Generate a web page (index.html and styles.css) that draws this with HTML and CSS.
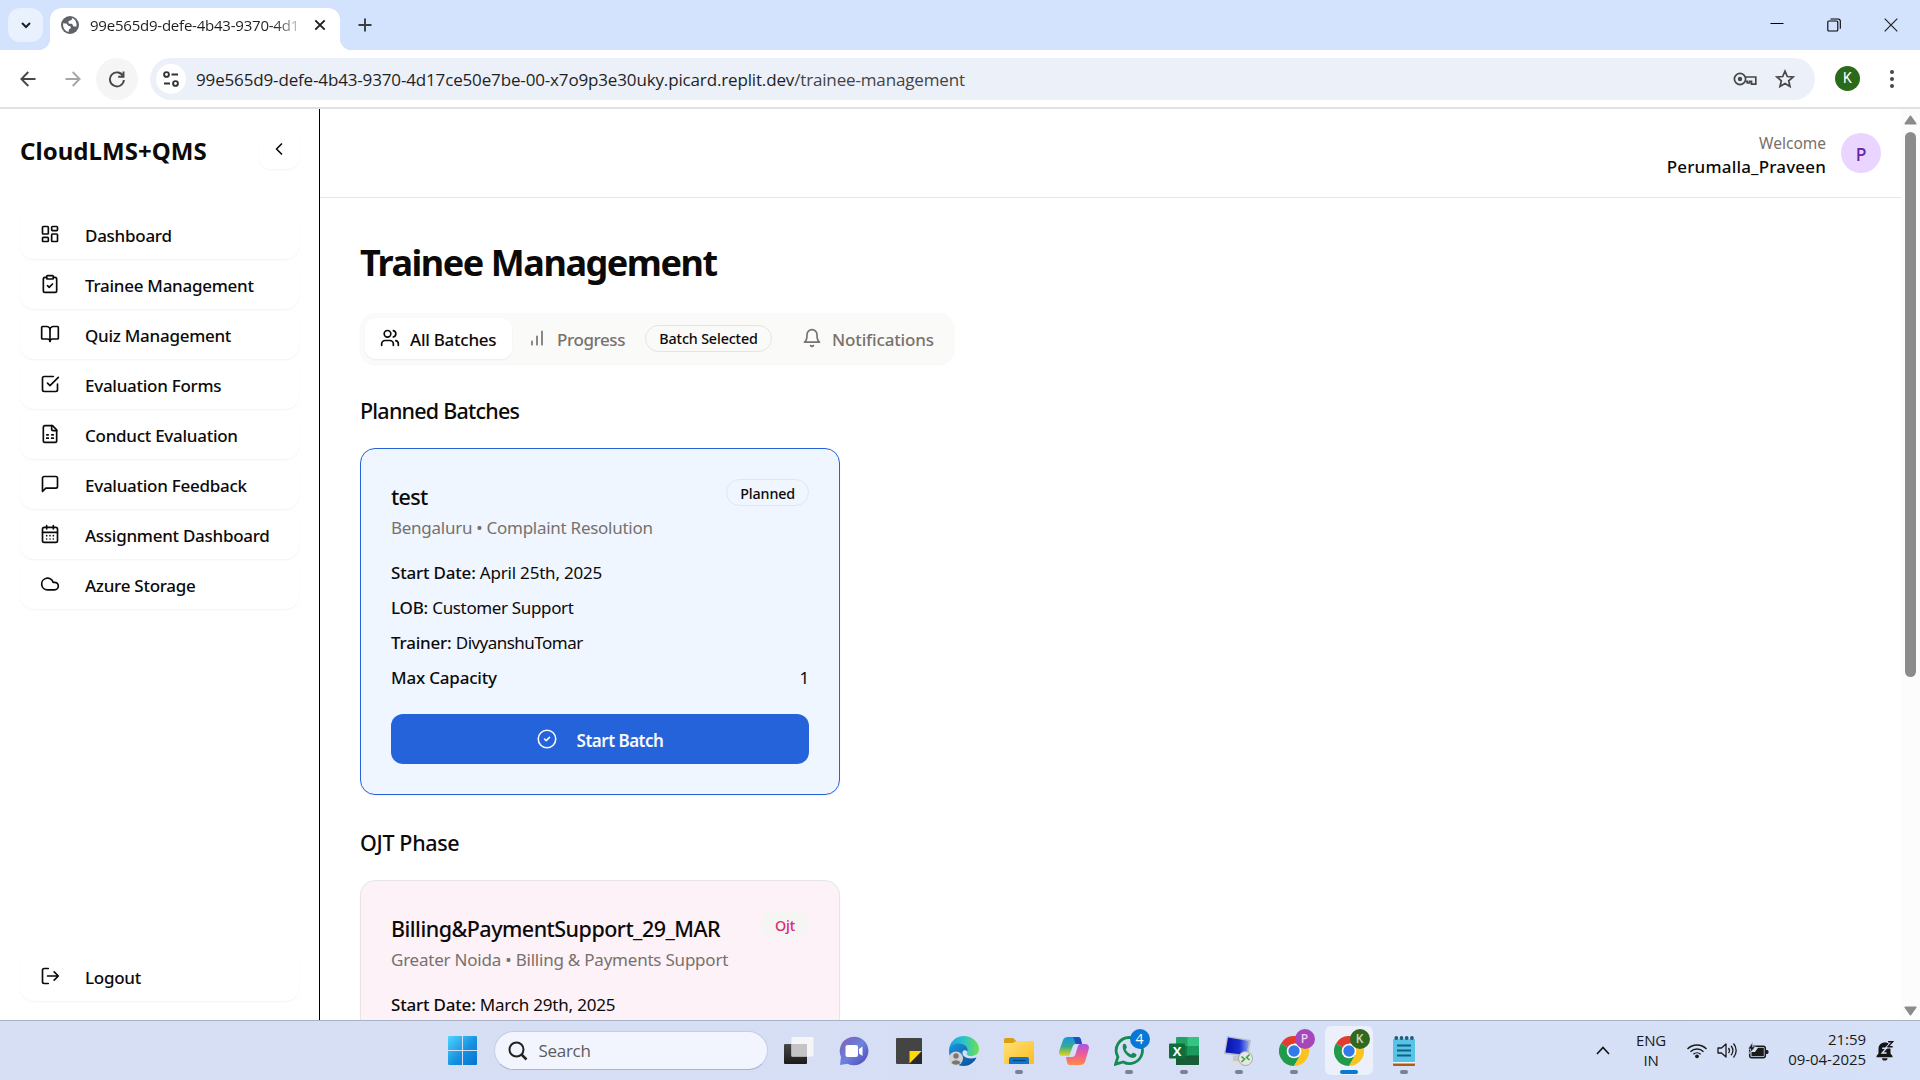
FILE: index.html
```html
<!DOCTYPE html>
<html lang="en">
<head>
<meta charset="utf-8">
<title>Trainee Management</title>
<link rel="stylesheet" href="styles.css">
</head>
<body>
<div class="tabstrip">
  <div class="tab-search"><svg width="12" height="12" viewBox="0 0 12 12"><path d="M2 4l4 4 4-4" fill="none" stroke="#1f1f1f" stroke-width="2"/></svg></div>
  <div class="tab">
    <svg class="favicon" width="18" height="18" viewBox="0 0 18 18"><circle cx="9" cy="9" r="9" fill="#5f6368"/><path d="M11.2 2.1c-.3 1.6-.6 2.3-1.8 2.5-1.700.2-1.900.4-1.900 1.600 0 1 .4 1.500 1.600 1.500 2.200 0 2.600.6 2.800 1.900.2.9.900 1 1.900 1l1.600-.1A7.200 7.200 0 0 0 11.200 2.100zM2.200 7.200C1.500 11 3.500 14.800 7.500 16l.300-1.700c.1-.900.500-1.200 1.300-1.600 1-.5 1-2-.1-2.500C7.900 9.700 7 9.900 6.500 8.900 6 7.800 5.500 7.600 4.500 7.500z" fill="#fff"/></svg>
    <span class="tab-title">99e565d9-defe-4b43-9370-4d1</span>
    <svg width="12" height="12" viewBox="0 0 12 12"><path d="M1.300 1.300l9.400 9.400M10.700 1.300l-9.400 9.400" stroke="#1f1f1f" stroke-width="1.900"/></svg>
  </div>
  <svg class="new-tab" width="14" height="14" viewBox="0 0 14 14"><path d="M7 .5v13M.5 7h13" stroke="#3c3c3c" stroke-width="1.900"/></svg>
  <div class="window-controls">
    <svg width="14" height="14" viewBox="0 0 14 14"><path d="M.5 5.500h13" stroke="#000"/></svg>
    <svg width="14" height="14" viewBox="0 0 14 14" fill="none" stroke="#000" stroke-width="1.100"><rect x=".8" y="3" width="10" height="10" rx="1"/><path d="M3.500 1h7.500a2.300 2.300 0 0 1 2.300 2.300v7.500"/></svg>
    <svg width="14" height="14" viewBox="0 0 14 14"><path d="M.7.7l12.600 12.600M13.300.7L.7 13.300" stroke="#222" stroke-width="1.200"/></svg>
  </div>
</div>

<div class="toolbar">
  <svg class="back" width="16" height="16" viewBox="0 0 16 16" fill="none" stroke="#474747" stroke-width="1.900"><path d="M15.500 8H1.500M8.300 1L1.400 8l6.900 7"/></svg>
  <svg class="forward" width="16" height="16" viewBox="0 0 16 16" fill="none" stroke="#a6a6a6" stroke-width="1.900"><path d="M.5 8h14M7.700 1l6.900 7-6.900 7"/></svg>
  <div class="reload"><svg width="18" height="18" viewBox="0 0 18 18" fill="none" stroke="#474747" stroke-width="1.900"><path d="M15.300 6.500A7 7 0 1 0 15.900 10"/><path d="M15.500 1.500v5.300h-5.300"/></svg></div>
  <div class="omnibox">
    <div class="site-info"><svg width="18" height="18" viewBox="0 0 18 18" fill="none" stroke="#333" stroke-width="1.900"><circle cx="4.500" cy="4.500" r="2.400"/><path d="M9.500 4.500H16M2 13.500h6"/><circle cx="13.500" cy="13.500" r="2.400"/></svg></div>
    <span class="url">99e565d9-defe-4b43-9370-4d17ce50e7be-00-x7o9p3e30uky.picard.replit.dev<span class="path">/trainee-management</span></span>
    <svg class="key" width="24" height="14" viewBox="0 0 24 14" fill="none" stroke="#474747" stroke-width="1.700"><circle cx="7" cy="7" r="5.600"/><circle cx="7" cy="7" r="2.200" fill="#474747" stroke="none"/><path d="M12.300 5h10.500v7.200h-4.300V9.300h-2V11h-2.200V9.300h-2"/></svg>
    <svg class="star" width="20" height="20" viewBox="0 0 20 20"><path d="M10 2.200l2.300 5.300 5.800.5-4.400 3.800 1.300 5.700-5-3-5 3 1.300-5.700L1.900 8l5.800-.5z" fill="none" stroke="#474747" stroke-width="1.700"/></svg>
  </div>
  <div class="profile">K</div>
  <svg class="menu" width="4" height="20" viewBox="0 0 4 20" fill="#474747"><circle cx="2" cy="3" r="2"/><circle cx="2" cy="10" r="2"/><circle cx="2" cy="17" r="2"/></svg>
</div>

<div class="page">
  <aside class="sidebar">
    <div class="brand-row">
      <div class="brand">CloudLMS+QMS</div>
      <div class="collapse"><svg class="ico" viewBox="0 0 24 24"><path d="m15 18-6-6 6-6"/></svg></div>
    </div>
    <nav class="nav">
      <a class="nav-item"><svg class="ico" viewBox="0 0 24 24"><rect width="7" height="9" x="3" y="3" rx="1"/><rect width="7" height="5" x="14" y="3" rx="1"/><rect width="7" height="9" x="14" y="12" rx="1"/><rect width="7" height="5" x="3" y="16" rx="1"/></svg><span>Dashboard</span></a>
      <a class="nav-item"><svg class="ico" viewBox="0 0 24 24"><rect width="8" height="4" x="8" y="2" rx="1"/><path d="M16 4h2a2 2 0 0 1 2 2v14a2 2 0 0 1-2 2H6a2 2 0 0 1-2-2V6a2 2 0 0 1 2-2h2"/><path d="m9 14 2 2 4-4"/></svg><span>Trainee Management</span></a>
      <a class="nav-item"><svg class="ico" viewBox="0 0 24 24"><path d="M12 7v14"/><path d="M3 18a1 1 0 0 1-1-1V4a1 1 0 0 1 1-1h5a4 4 0 0 1 4 4 4 4 0 0 1 4-4h5a1 1 0 0 1 1 1v13a1 1 0 0 1-1 1h-6a3 3 0 0 0-3 3 3 3 0 0 0-3-3z"/></svg><span>Quiz Management</span></a>
      <a class="nav-item"><svg class="ico" viewBox="0 0 24 24"><path d="m9 11 3 3L22 4"/><path d="M21 12v7a2 2 0 0 1-2 2H5a2 2 0 0 1-2-2V5a2 2 0 0 1 2-2h11"/></svg><span>Evaluation Forms</span></a>
      <a class="nav-item"><svg class="ico" viewBox="0 0 24 24"><path d="M15 2H6a2 2 0 0 0-2 2v16a2 2 0 0 0 2 2h12a2 2 0 0 0 2-2V7Z"/><path d="M14 2v4a2 2 0 0 0 2 2h4"/><path d="M8 13h2M14 13h2M8 17h2M14 17h2"/></svg><span>Conduct Evaluation</span></a>
      <a class="nav-item"><svg class="ico" viewBox="0 0 24 24"><path d="M21 15a2 2 0 0 1-2 2H7l-4 4V5a2 2 0 0 1 2-2h14a2 2 0 0 1 2 2z"/></svg><span>Evaluation Feedback</span></a>
      <a class="nav-item"><svg class="ico" viewBox="0 0 24 24"><path d="M8 2v4M16 2v4"/><rect width="18" height="18" x="3" y="4" rx="2"/><path d="M3 10h18M8 14h.01M12 14h.01M16 14h.01M8 18h.01M12 18h.01M16 18h.01"/></svg><span>Assignment Dashboard</span></a>
      <a class="nav-item"><svg class="ico" viewBox="0 0 24 24"><path d="M17.500 19H9a7 7 0 1 1 6.710-9h1.790a4.500 4.500 0 1 1 0 9Z"/></svg><span>Azure Storage</span></a>
    </nav>
    <a class="nav-item logout"><svg class="ico" viewBox="0 0 24 24"><path d="M10 3H5a2 2 0 0 0-2 2v14a2 2 0 0 0 2 2h5M9 12h13M17 7l5 5-5 5"/></svg><span>Logout</span></a>
  </aside>

  <div class="content">
    <header class="header">
      <div class="user"><div class="welcome">Welcome</div><div class="username">Perumalla_Praveen</div></div>
      <div class="avatar">P</div>
    </header>
    <main class="main">
      <h1>Trainee Management</h1>
      <div class="tabs">
        <div class="tab-item active"><svg class="ico" viewBox="0 0 24 24"><path d="M16 21v-2a4 4 0 0 0-4-4H6a4 4 0 0 0-4 4v2"/><circle cx="9" cy="7" r="4"/><path d="M22 21v-2a4 4 0 0 0-3-3.870M16 3.130a4 4 0 0 1 0 7.750"/></svg><span class="w-all">All Batches</span></div>
        <div class="tab-item progress"><svg class="ico" viewBox="0 0 24 24"><path d="M12 20V10M18 20V4M6 20v-4"/></svg><span class="w-progress">Progress</span><div class="badge outline">Batch Selected</div></div>
        <div class="tab-item"><svg class="ico" viewBox="0 0 24 24"><path d="M6 8a6 6 0 0 1 12 0c0 7 3 9 3 9H3s3-2 3-9"/><path d="M10.300 21a1.940 1.940 0 0 0 3.400 0"/></svg><span class="w-notif">Notifications</span></div>
      </div>

      <h2>Planned Batches</h2>
      <section class="card planned">
        <div class="card-head"><h3>test</h3><div class="badge outline">Planned</div></div>
        <p class="sub">Bengaluru • Complaint Resolution</p>
        <div class="rows">
          <div class="row"><b>Start Date:</b> April 25th, 2025</div>
          <div class="row"><b>LOB:</b> <span class="lob">Customer Support</span></div>
          <div class="row"><b>Trainer:</b> <span class="trainer">DivyanshuTomar</span></div>
          <div class="row split"><b>Max Capacity</b><span>1</span></div>
        </div>
        <button class="start"><svg class="ico" viewBox="0 0 24 24"><circle cx="12" cy="12" r="10.500"/><path d="m9 12 2 2 4-4"/></svg><span>Start Batch</span></button>
      </section>

      <h2 class="ojt-title">OJT Phase</h2>
      <section class="card ojt">
        <div class="card-head"><h3 class="long">Billing&amp;PaymentSupport_29_MAR</h3><div class="badge pink">Ojt</div></div>
        <p class="sub">Greater Noida • Billing &amp; Payments Support</p>
        <div class="rows"><div class="row"><b>Start Date:</b> March 29th, 2025</div></div>
      </section>
    </main>
  </div>

  <div class="scrollbar">
    <svg width="13" height="10" viewBox="0 0 13 10"><path d="M6.500 1.200L11.800 8.800H1.200z" fill="#8b8b8b" stroke="#8b8b8b" stroke-width="1.500" stroke-linejoin="round"/></svg>
    <div class="thumb"></div>
    <svg width="13" height="10" viewBox="0 0 13 10"><path d="M6.500 8.800L11.800 1.200H1.200z" fill="#8b8b8b" stroke="#8b8b8b" stroke-width="1.500" stroke-linejoin="round"/></svg>
  </div>
</div>

<div class="taskbar">
  <svg class="win" width="29" height="29" viewBox="0 0 29 29"><defs><linearGradient id="w" x1="0" y1="0" x2="1" y2="1"><stop offset="0" stop-color="#4fd4ff"/><stop offset=".55" stop-color="#1691e0"/><stop offset="1" stop-color="#0672d0"/></linearGradient></defs><path d="M1 0h13v14H0V1a1 1 0 0 1 1-1zM15 0h13a1 1 0 0 1 1 1v13H15zM0 15h14v14H1a1 1 0 0 1-1-1zM15 15h14v13a1 1 0 0 1-1 1H15z" fill="url(#w)"/></svg>
  <div class="search"><svg width="20" height="20" viewBox="0 0 20 20" fill="none" stroke="#222" stroke-width="2"><circle cx="8.500" cy="8.500" r="7"/><path d="M13.500 13.500l5 5" stroke-width="2.500"/></svg><span>Search</span></div>
  <div class="apps">
    <div class="app"><svg width="30" height="30" viewBox="0 0 30 30"><defs><linearGradient id="tk" x1="0" y1="0" x2="0" y2="1"><stop offset="0" stop-color="#484848"/><stop offset="1" stop-color="#1a1a1a"/></linearGradient></defs><rect x="0" y="8" width="23" height="20" rx="1" fill="url(#tk)"/><rect x="7.500" y="1" width="22" height="19.500" rx="1" fill="#f6f6f6"/><path d="M7.500 8H23v12.500H7.500z" fill="#c4c4c4"/></svg></div>
    <div class="app"><svg width="30" height="30" viewBox="0 0 30 30"><defs><linearGradient id="ch" x1="0" y1="0" x2="1" y2="1"><stop offset="0" stop-color="#9a5fae"/><stop offset=".3" stop-color="#6d73cc"/><stop offset=".5" stop-color="#6c83dd"/><stop offset="1" stop-color="#4b45b8"/></linearGradient></defs><path d="M15 .7a14.300 14.300 0 1 1-6.500 27L1 29l1-8A14.300 14.300 0 0 1 15 .7z" fill="url(#ch)"/><rect x="6.500" y="9" width="12.500" height="12" rx="2" fill="#fff"/><path d="M20 13l3.500-2.500V20L20 17.500z" fill="#fff"/></svg></div>
    <div class="app"><svg width="30" height="30" viewBox="0 0 30 30"><rect x="2" y="2" width="26" height="26" rx="1" fill="#444"/><path d="M15.500 15H28L15.500 27.500z" fill="#ffd900"/><path d="M28 15v13H15.500z" fill="#292929"/></svg></div>
    <div class="app"><svg width="30" height="30" viewBox="0 0 30 30"><defs><linearGradient id="e1" x1="0" y1="0" x2="1" y2="0"><stop offset="0" stop-color="#18a6e2"/><stop offset=".5" stop-color="#2bc3c9"/><stop offset="1" stop-color="#70e04f"/></linearGradient><linearGradient id="e2" x1="0" y1="0" x2="1" y2="1"><stop offset="0" stop-color="#1a96de"/><stop offset="1" stop-color="#0c4b98"/></linearGradient></defs><path d="M0 15C0 6 7 0 15 0s15 6 15 13c0 5-4 7-8 7s-5-2-3.500-4S18 11 14 11 2 11 0 15z" fill="url(#e1)"/><path d="M0 15C1 8 8 6.500 13 8s6.500 5.500 5.500 8c-1.500-2.500-4.500-2-5 0-1 5 6 8 14 5.500C25 27 20 30 15 30 6 30 0 23 0 15z" fill="url(#e2)"/><circle cx="7" cy="22.500" r="7" fill="#d2d2d2"/><circle cx="7" cy="20" r="2.700" fill="#777"/><path d="M2.500 27a4.700 4 0 0 1 9 0 7 7 0 0 1-9 0z" fill="#777"/></svg></div>
    <div class="app open"><svg width="30" height="30" viewBox="0 0 30 30"><defs><linearGradient id="f" x1="0" y1="0" x2="1" y2="1"><stop offset="0" stop-color="#ffe17a"/><stop offset="1" stop-color="#fcbc1d"/></linearGradient></defs><path d="M0 3.500A1.500 1.500 0 0 1 1.500 2H9l4 3.500V8H0z" fill="#dc9e0e"/><path d="M0 7h9l3-2h17a1 1 0 0 1 1 1v21a1 1 0 0 1-1 1H1a1 1 0 0 1-1-1z" fill="url(#f)"/><path d="M5 28v-5a2 2 0 0 1 2-2h16a2 2 0 0 1 2 2v5z" fill="#1274cc"/><path d="M8.500 24.500h13" stroke="#07437f" stroke-width="1.200"/></svg></div>
    <div class="app"><svg width="30" height="30" viewBox="0 0 30 30"><defs><linearGradient id="c1" x1="0" y1="0" x2="0" y2="1"><stop offset="0" stop-color="#1496e8"/><stop offset=".5" stop-color="#39a98c"/><stop offset="1" stop-color="#e8d51c"/></linearGradient><linearGradient id="c2" x1="0" y1="0" x2="0" y2="1"><stop offset="0" stop-color="#a854ec"/><stop offset=".5" stop-color="#ee5d95"/><stop offset="1" stop-color="#ff8b45"/></linearGradient></defs><path d="M9 1h10c3 0 3 3 4 7h-6c-2 0-3 1-3.500 3L11 18c-.500 2-1.500 2-3 2H4c-4 0-4.500-3-3.500-6L4 4c.8-2 2.500-3 5-3z" fill="url(#c1)"/><path d="M15 1h4c3 0 3 3 4 7h-5c-3 0-2-7-5-7z" fill="#1c4fc4"/><path d="M21 29H11c-3 0-3-3-4-8h6c2 0 3-1 3.500-3L19 10c.5-1.500 1.500-2 3-2h4c4 0 4.500 3 3.500 6L26 26c-.8 2-2.500 3-5 3z" fill="url(#c2)"/></svg></div>
    <div class="app open"><svg width="30" height="30" viewBox="0 0 30 30"><path d="M15.500 1.500a13 13 0 1 1-6.300 24.400L1.600 28.200l2.300-7.300A13 13 0 0 1 15.500 1.500z" fill="none" stroke="#168b51" stroke-width="2.800"/><path d="M9 8.500c1-1.200 2.300-1 2.800 0l1 2.400c.3.800-.7 1.600-1.200 2.300 1.100 2.600 3.100 4.300 5.600 5.200.8-.7 1.400-1.900 2.200-1.600l2.700 1.300c.8.500.2 2.400-.6 3-5 3.500-14.700-5.500-12.500-12.600z" fill="#168b51"/></svg><span class="count blue">4</span></div>
    <div class="app open"><svg width="30" height="30" viewBox="0 0 30 30"><rect x="7" y="1" width="23" height="28" rx="1" fill="#21a366"/><path d="M18.500 1H29a1 1 0 0 1 1 1v8H18.500z" fill="#33c481"/><path d="M7 10h11.500v10H7z" fill="#107c41"/><path d="M18.500 10H30v10H18.500z" fill="#1b9a5f"/><path d="M7 20h23v8a1 1 0 0 1-1 1H7z" fill="#185c37"/><path d="M18.500 20H30v-1H18.500z" fill="#107c41"/><rect x="0" y="7.500" width="16" height="15" rx="1" fill="#0e6e3a"/><text x="8" y="19.500" text-anchor="middle" font-family="Open Sans,sans-serif" font-weight="700" font-size="13" fill="#fff">X</text></svg></div>
    <div class="app open"><svg width="30" height="30" viewBox="0 0 30 30"><defs><linearGradient id="r" x1="0" y1="0" x2="1" y2="0"><stop offset="0" stop-color="#0712a8"/><stop offset=".6" stop-color="#1a2fd2"/><stop offset="1" stop-color="#8ea7ee"/></linearGradient></defs><ellipse cx="13" cy="25.500" rx="9" ry="4" fill="#dcdee2"/><path d="M9 20h9v5H9z" fill="#c3c7ce"/><path d="M3 0l24 4-3 17L0 18z" fill="#b6bdc9"/><path d="M4 1.500l21 3.500-2.500 14L1.500 16.500z" fill="url(#r)"/><circle cx="21.500" cy="22.500" r="7" fill="#e6e6e6" stroke="#a9a9a9"/><path d="M17.500 20.500l3 2.500-3 3M25.500 18.500l-3 3 3 2.500" fill="none" stroke="#3ba53a" stroke-width="1.600"/></svg></div>
    <div class="app open"><svg width="30" height="30" viewBox="0 0 30 30"><path d="M15 15L2 7.500A15 15 0 0 1 28 7.500H15z" fill="#e33b2e"/><path d="M15 15l6.500 3.700L15 30A15 15 0 0 1 2 7.500z" fill="#219a4b"/><path d="M15 7.500h13A15 15 0 0 1 15 30l6.500-11.300z" fill="#fcc31e"/><circle cx="15" cy="15" r="7.300" fill="#fff"/><circle cx="15" cy="15" r="5.700" fill="#3479ea"/></svg><span class="count purple">P</span></div>
    <div class="app open current"><svg width="30" height="30" viewBox="0 0 30 30"><path d="M15 15L2 7.500A15 15 0 0 1 28 7.500H15z" fill="#e33b2e"/><path d="M15 15l6.500 3.700L15 30A15 15 0 0 1 2 7.500z" fill="#219a4b"/><path d="M15 7.500h13A15 15 0 0 1 15 30l6.500-11.300z" fill="#fcc31e"/><circle cx="15" cy="15" r="7.300" fill="#fff"/><circle cx="15" cy="15" r="5.700" fill="#3479ea"/></svg><span class="count green">K</span></div>
    <div class="app open"><svg width="30" height="30" viewBox="0 0 30 30"><rect x="4" y="24" width="22" height="6" rx="1" fill="#b05a16"/><rect x="4" y="24" width="22" height="3.500" fill="#f3f3f3"/><rect x="4" y="3" width="22" height="23" rx="1" fill="#57c3e6"/><path d="M8 9.500h14M8 14.500h14M8 19.500h14" stroke="#11607f" stroke-width="1.800"/><g fill="#14607f"><circle cx="7.300" cy="2" r="1.900"/><circle cx="12.500" cy="2" r="1.900"/><circle cx="17.700" cy="2" r="1.900"/><circle cx="22.900" cy="2" r="1.900"/></g></svg></div>
  </div>
  <div class="tray">
    <svg class="caret" width="14" height="9" viewBox="0 0 14 9"><path d="M1 8l6-6.500L13 8" fill="none" stroke="#111" stroke-width="1.600"/></svg>
    <div class="lang">ENG<br>IN</div>
    <svg width="20" height="16" viewBox="0 0 20 16" fill="none" stroke="#1a1a1a" stroke-width="1.400"><path d="M.5 6a13.300 13.300 0 0 1 19 0M3.500 8.700a9.200 9.200 0 0 1 13 0M6.400 11.300a5.200 5.200 0 0 1 7.200 0"/><circle cx="10" cy="13.300" r="1.900" fill="#1a1a1a" stroke="none"/></svg>
    <svg width="21" height="17" viewBox="0 0 21 17" fill="none" stroke="#1a1a1a" stroke-width="1.300"><path d="M1 6h3.500L9 2v13l-4.500-4H1z" stroke-linejoin="round"/><path d="M11.500 6a4 4 0 0 1 0 5M14 3.700a7 7 0 0 1 0 9.600M16.500 1.500a10.500 10.500 0 0 1 0 14"/></svg>
    <svg class="battery" width="21" height="18" viewBox="0 0 21 18"><rect x="1.700" y="4.200" width="15.600" height="11.600" rx="2" fill="none" stroke="#1a1a1a" stroke-width="1.500"/><path d="M18 8h1.500l1 1v2l-1 1H18zM3.500 14.300V10h3.500l3-4.300h5.800v8.600z" fill="#1a1a1a"/><path d="M5-.5L0 7h2.800L1.500 11.500 7.500 4.800H4.200z" fill="#1a1a1a" stroke="#d6e1f7" stroke-width=".7"/></svg>
    <div class="clock">21:59<br>09-04-2025</div>
    <svg class="bell" width="18" height="20" viewBox="0 0 18 20"><path d="M9 1.500C5 1.500 2.500 4 2.500 8v4.500L.5 15v1.200h16V15l-2-2.500V8c0-4-1.500-6.500-5.500-6.500zM6 17.200h5.500a2.700 2.300 0 0 1-5.500 0z" fill="#151515"/><path d="M12 .8h4.500l-4.500 5h4.700" fill="none" stroke="#d6e1f7" stroke-width="3.200"/><path d="M12 .8h4.500l-4.500 5h4.700" fill="none" stroke="#151515" stroke-width="1.400"/><path d="M6.200 7.300h4.200l-4.200 4.700h4.400" fill="none" stroke="#d6e1f7" stroke-width="1.400"/></svg>
  </div>
</div>
</body>
</html>
```
FILE: styles.css
```css
* { box-sizing: border-box; }
body { margin: 0; width: 1920px; height: 1080px; overflow: hidden; display: flex; flex-direction: column; font-family: "Noto Sans", "Open Sans", sans-serif; color: #0c0a09; background: #fff; }
svg { flex: none; display: block; }
span, h3, .brand { white-space: nowrap; }

/* browser tab strip */
.tabstrip { height: 50px; flex: none; background: #d3e2fd; display: flex; align-items: center; padding-left: 8px; }
.tab-search { width: 35px; height: 34px; border-radius: 12px; background: #e9f0fe; display: flex; align-items: center; justify-content: center; }
.tab { position: relative; align-self: flex-end; width: 290px; height: 42px; margin-left: 7px; padding: 0 14px 8px 11px; background: #fff; border-radius: 12px 12px 0 0; display: flex; align-items: center; }
.tab::before, .tab::after { content: ""; position: absolute; bottom: 0; width: 12px; height: 12px; }
.tab::before { left: -12px; background: radial-gradient(circle at 0 0, transparent 12px, #fff 12.500px); }
.tab::after { right: -12px; background: radial-gradient(circle at 100% 0, transparent 12px, #fff 12.500px); }
.tab-title { width: 211px; margin: 0 14px 0 11px; font: 400 15px/22px "Open Sans", sans-serif; letter-spacing: -.22px; color: transparent; background: linear-gradient(90deg, #1f1f1f 184px, #cfcfcf 209px); -webkit-background-clip: text; background-clip: text; }
.new-tab { margin-left: 18px; }
.window-controls { margin-left: auto; margin-right: 22px; display: flex; gap: 43px; }

.toolbar { height: 59px; flex: none; border-bottom: 2px solid #e0e1e3; background: #fff; display: flex; align-items: center; padding: 1px 26px 0 20px; }
.back { margin-top: -1px; }
.forward { margin: -1px 0 0 29px; }
.reload { width: 42px; height: 42px; margin-left: 15px; border-radius: 50%; background: #f5f5f6; display: flex; align-items: center; justify-content: center; }
.omnibox { width: 1665px; height: 42px; margin-left: 12px; border-radius: 21px; background: #ebf0f9; display: flex; align-items: center; padding: 0 20px 0 6px; }
.site-info { width: 30px; height: 30px; border-radius: 50%; background: #fff; display: flex; align-items: center; justify-content: center; }
.url { margin-left: 10px; padding-top: 1px; font: 400 17px/24px "Open Sans", sans-serif; letter-spacing: -.15px; color: #1f1f1f; }
.path { color: #444; }
.key { margin-left: auto; }
.star { margin-left: 18px; }
.profile { width: 25px; height: 25px; margin: -1px 0 0 20px; border-radius: 50%; background: #2c6a1b; color: #fff; font: 400 14px/25px Roboto, sans-serif; text-align: center; }
.menu { margin-left: auto; }

/* page frame */
.page { height: 911px; flex: none; display: flex; overflow: hidden; }
.ico { width: 20px; height: 20px; fill: none; stroke: currentColor; stroke-width: 2; stroke-linecap: round; stroke-linejoin: round; }
.sidebar { width: 320px; border-right: 1px solid #000; padding: 20px 20px 19px; display: flex; flex-direction: column; }
.brand-row { display: flex; align-items: center; justify-content: space-between; height: 40px; margin-bottom: 40px; }
.brand { padding-top: 3px; font-size: 24px; line-height: 34px; font-weight: 700; letter-spacing: .05px; }
.collapse { width: 40px; height: 40px; border-radius: 12px; box-shadow: 0 1px 2px rgba(0,0,0,.05); display: flex; align-items: center; justify-content: center; }
.nav-item { height: 50px; padding: 0 20px; border-radius: 14px; box-shadow: 0 1px 2px rgba(0,0,0,.05); display: flex; align-items: center; gap: 25px; font-size: 17px; font-weight: 500; letter-spacing: -.27px; }
.nav-item span { padding-top: 3px; line-height: 24px; }
.logout { margin-top: auto; }

.content { flex: 1; min-width: 0; overflow: hidden; }
.header { height: 89px; border-bottom: 1px solid #e6e5e4; padding-right: 20px; display: flex; align-items: center; justify-content: flex-end; gap: 15px; }
.user { text-align: right; padding-top: 3px; }
.welcome { font-size: 15.500px; line-height: 24px; color: #78716c; }
.username { font-size: 17px; line-height: 24px; font-weight: 500; letter-spacing: .18px; }
.avatar { width: 40px; height: 40px; border-radius: 50%; background: #e9d5ff; color: #6b21a8; font-size: 17.500px; line-height: 42px; font-weight: 500; text-align: center; }

.main { padding: 42px 40px 40px; }
h1, h2, h3, p { margin: 0; }
h1 { font-size: 36px; line-height: 46px; font-weight: 700; letter-spacing: -1.450px; }
.tabs { width: 594px; height: 51px; margin: 27px 0 29px; padding: 5px; border-radius: 15px; background: #fafaf9; box-shadow: 0 1px 2px rgba(0,0,0,.04); display: flex; }
.tab-item { height: 41px; padding: 0 15px; display: flex; align-items: center; gap: 10px; border-radius: 11px; color: #78716c; font-size: 17px; font-weight: 500; }
.tab-item .ico { margin-top: -1px; }
.tab-item > span { padding-top: 2px; line-height: 24px; letter-spacing: -.25px; }
.tab-item.active { background: #fff; color: #0c0a09; box-shadow: 0 1px 2px rgba(0,0,0,.06); }
.w-all { width: 87px; }
.w-progress { width: 68px; }
.tab-item .w-progress { letter-spacing: -.4px; }
.tab-item .w-notif { width: 101px; letter-spacing: -.15px; }
.badge { height: 27px; border-radius: 14px; padding: 2px 13px 0; font-size: 14.300px; line-height: 24px; font-weight: 500; letter-spacing: -.15px; white-space: nowrap; border: 1px solid transparent; color: #0c0a09; text-align: center; }
.badge.outline { border-color: #e7e5e4; }
.tab-item .badge { width: 127px; margin: -1px 0 0 10px; padding: 1px 0 0; }
.badge.pink { background: #f5f5f4; color: #db2777; }

h2 { font-size: 21.500px; line-height: 35px; font-weight: 500; letter-spacing: -.780px; margin-bottom: 20px; }
.ojt-title { margin-top: 30px; letter-spacing: -.35px; }
.card { width: 480px; border: 1px solid #e7e5e4; border-radius: 15px; padding: 30px; box-shadow: 0 1px 2px rgba(0,0,0,.05); }
.planned { height: 347px; border-color: #2563db; background: #eff6ff; }
.ojt { height: 347px; background: #fdf2f8; }
.card-head { display: flex; justify-content: space-between; align-items: flex-start; height: 36px; }
h3 { font-size: 21.500px; line-height: 35px; font-weight: 500; letter-spacing: -.7px; }
h3.long { letter-spacing: -.52px; }
.sub { color: #78716c; font-size: 17px; line-height: 25px; letter-spacing: -.27px; white-space: nowrap; }
.ojt .sub { letter-spacing: -.22px; }
.rows { display: flex; flex-direction: column; gap: 10px; margin-top: 20px; font-size: 17px; line-height: 25px; letter-spacing: -.2px; }
.row b { font-weight: 500; }
.row .lob { letter-spacing: -.35px; }
.row .trainer { letter-spacing: -.53px; }
.split { display: flex; justify-content: space-between; }
.start { width: 418px; height: 50px; margin-top: 24px; padding: 0; border: 0; border-radius: 12px; background: #2563db; color: #f8fafc; font: 600 17px/24px "Noto Sans", sans-serif; letter-spacing: -.5px; display: flex; align-items: center; justify-content: center; gap: 20px; }
.start span { padding-top: 3px; }
.start .ico { stroke-width: 1.900; }

.scrollbar { width: 19px; background: #fcfcfc; display: flex; flex-direction: column; align-items: center; padding: 6px 0 4px; }
.thumb { width: 11px; height: 545px; margin: 7px 0 auto; border-radius: 6px; background: #8b8b8b; }

/* taskbar */
.taskbar { height: 60px; flex: none; border-top: 1px solid #a9b2c6; background: linear-gradient(90deg, #d6dff4, #d6def5 50%, #d5e1f8); display: flex; align-items: center; padding-left: 448px; }
.search { width: 274px; height: 39px; margin: 0 3.500px 0 16.500px; border-radius: 20px; border: 1px solid #c4cde2; border-bottom-color: #a9b3cb; background: #f2f5fd; display: flex; align-items: center; gap: 11px; padding-left: 13px; font: 400 17px/24px "Open Sans", sans-serif; letter-spacing: -.3px; color: #5b5b5f; }
.apps { display: flex; }
.app { position: relative; width: 55px; height: 59px; display: flex; align-items: center; justify-content: center; }
.app svg { position: relative; z-index: 1; }
.open::after { content: ""; position: absolute; z-index: 1; left: 23.500px; bottom: 6px; width: 8px; height: 4px; border-radius: 2px; background: #7b8190; }
.current::before { content: ""; position: absolute; left: 3.500px; top: 5px; width: 48px; height: 49px; border-radius: 6px; background: #ebf0fb; }
.current::after { left: 18.500px; width: 18px; background: #0a78d7; }
.count { position: absolute; z-index: 2; left: 28.500px; top: 8px; width: 20px; height: 20px; border-radius: 50%; color: #fff; font: 400 13px/20px "Open Sans", sans-serif; text-align: center; }
.blue { background: #0878d7; font-size: 14px; }
.purple { background: #a646bb; color: #eccff2; font-weight: 600; font-size: 12px; }
.green { background: #33691e; color: #c9dcc0; font-weight: 600; font-size: 12px; }
.tray { margin-left: auto; display: flex; align-items: center; padding-right: 26px; font: 400 15px/20px "Open Sans", sans-serif; color: #1a1a1a; }
.caret { margin-top: -1px; }
.lang { width: 32px; margin: -2px 20px 0 25px; text-align: center; letter-spacing: -.2px; }
.tray svg + svg { margin-left: 10px; }
.clock { width: 80px; margin: -3px 10px 0 17px; text-align: right; white-space: nowrap; letter-spacing: -.05px; }
```
